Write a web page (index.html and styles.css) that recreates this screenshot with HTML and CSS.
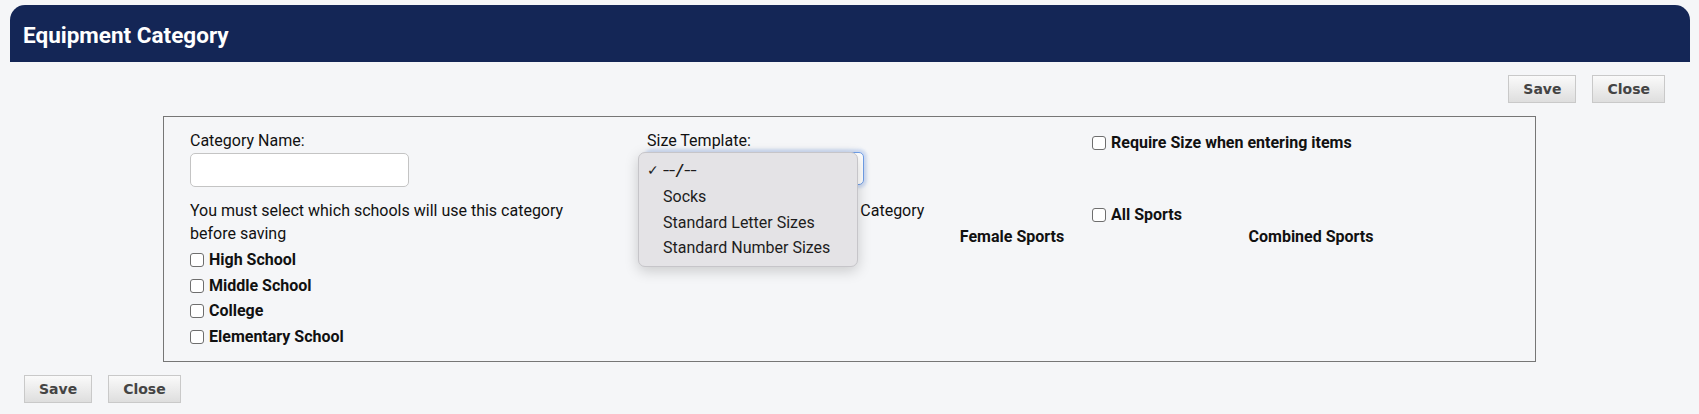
FILE: index.html
```html
<!DOCTYPE html>
<html lang="en">
<head>
<meta charset="utf-8">
<title>Equipment Category</title>
<link rel="stylesheet" href="styles.css">
</head>
<body>
<div class="page">
  <header class="titlebar"><h1 class="title">Equipment Category</h1></header>

  <div class="actions actions-top">
    <button class="btn" type="button">Save</button>
    <button class="btn" type="button">Close</button>
  </div>

  <div class="formbox">
    <div class="col-school">
      <label class="field-label">Category Name:</label>
      <input class="text-input" type="text">
      <p class="note">You must select which schools will use this category<br>before saving</p>
      <ul class="checklist">
        <li><label class="check"><input class="box" type="checkbox"><span>High School</span></label></li>
        <li><label class="check"><input class="box" type="checkbox"><span>Middle School</span></label></li>
        <li><label class="check"><input class="box" type="checkbox"><span>College</span></label></li>
        <li><label class="check"><input class="box" type="checkbox"><span>Elementary School</span></label></li>
      </ul>
    </div>

    <div class="col-right">
      <div class="right-top">
        <div class="size-field">
          <label class="field-label">Size Template:</label>
          <div class="select-wrap">
            <div class="select"><span class="chev">&#8964;</span></div>
            <div class="menu">
              <div class="menu-item"><span class="tick">&#10003;</span><span class="dashes">--/--</span></div>
              <div class="menu-item">Socks</div>
              <div class="menu-item">Standard Letter Sizes</div>
              <div class="menu-item">Standard Number Sizes</div>
            </div>
          </div>
        </div>
        <label class="check check-top"><input class="box" type="checkbox"><span>Require Size when entering items</span></label>
      </div>

      <div class="right-mid">
        <div class="sports-note">Select sports that will use this Category</div>
        <label class="check check-all"><input class="box" type="checkbox"><span>All Sports</span></label>
      </div>

      <div class="sport-heads">
        <div class="sport-head">Male Sports</div>
        <div class="sport-head">Female Sports</div>
        <div class="sport-head">Combined Sports</div>
      </div>
    </div>
  </div>

  <div class="actions actions-bottom">
    <button class="btn" type="button">Save</button>
    <button class="btn" type="button">Close</button>
  </div>
</div>
</body>
</html>
```

FILE: styles.css
```css
* { box-sizing: border-box; }

html, body {
  margin: 0;
  padding: 0;
  background: #f5f6f8;
}

body {
  font-family: Roboto, "Liberation Sans", Arial, sans-serif;
  font-size: 16px;
  color: #111;
}

.page {
  padding-top: 5px;
}

.titlebar {
  margin: 0 9px 0 10px;
  height: 57px;
  background: #142656;
  border-radius: 15px 15px 0 0;
  display: flex;
  align-items: center;
  padding: 2px 13px 0;
}

.title {
  margin: 0;
  font-family: Roboto, "Liberation Sans", Arial, sans-serif;
  font-weight: 700;
  font-size: 22.5px;
  color: #fff;
}

.actions {
  display: flex;
  gap: 16px;
}

.actions-top {
  justify-content: flex-end;
  margin: 13px 34px 13px 0;
}

.actions-bottom {
  margin: 13px 0 0 24px;
}

.btn {
  height: 28px;
  padding: 0 14px;
  border: 1px solid #c9c9c9;
  border-radius: 0;
  background: linear-gradient(#fafafa, #dedede);
  font-family: "DejaVu Sans", Verdana, sans-serif;
  font-weight: 700;
  font-size: 14px;
  color: #444;
}

.formbox {
  width: 1373px;
  margin: 0 auto;
  border: 1px solid #767676;
  padding: 15px 0 11px 26px;
  display: flex;
}

.col-school {
  width: 457px;
  display: flex;
  flex-direction: column;
  align-items: flex-start;
}

.field-label {
  display: block;
  line-height: 18px;
}

.text-input {
  margin-top: 3px;
  width: 219px;
  height: 34px;
  border: 1px solid #c4c4c4;
  border-radius: 5px;
  background: #fff;
}

.note {
  margin: 12px 0 0;
  line-height: 23px;
}

.checklist {
  list-style: none;
  margin: 2px 0 0;
  padding: 0;
}

.checklist li {
  height: 25.75px;
  display: flex;
  align-items: center;
}

.check {
  display: flex;
  align-items: center;
  gap: 5px;
  font-weight: 700;
  line-height: 18px;
}

.box {
  appearance: none;
  -webkit-appearance: none;
  margin: 0;
  width: 14px;
  height: 14px;
  border: 1px solid #6e6e6e;
  border-radius: 3px;
  background: #fff;
}

.col-right {
  flex: 1;
}

.right-top {
  display: flex;
  align-items: flex-start;
}

.size-field {
  width: 445px;
}

.check-top {
  margin-top: 2px;
}

.select-wrap {
  position: relative;
  margin-top: 2px;
  width: 217px;
  height: 33px;
}

.select {
  width: 217px;
  height: 33px;
  border: 1px solid #6f9ee8;
  border-radius: 5px;
  background: #fff;
  box-shadow: 0 0 3px 3px rgba(120, 160, 230, 0.3);
  position: relative;
}

.chev {
  position: absolute;
  right: 3px;
  top: 3px;
  font-size: 12px;
  color: #333;
}

.menu {
  position: absolute;
  left: -9px;
  top: 0;
  width: 220px;
  padding: 5px 0;
  background: #e4e3e6;
  border: 1px solid #c6c5c9;
  border-radius: 7px;
  box-shadow: 0 4px 14px rgba(0, 0, 0, 0.18);
  z-index: 5;
}

.menu-item {
  position: relative;
  height: 25.75px;
  line-height: 25.75px;
  padding-left: 24px;
  font-size: 16px;
  color: #1d1d1d;
}

.dashes {
  display: inline-block;
  transform: scaleX(1.38);
  transform-origin: left center;
}

.tick {
  position: absolute;
  left: 8px;
  top: 0;
  font-size: 14px;
  font-weight: 400;
}

.right-mid {
  display: flex;
  align-items: flex-start;
  margin-top: 17px;
  height: 22px;
}

.sports-note {
  width: 445px;
  line-height: 18px;
  word-spacing: -0.6px;
}

.check-all {
  margin-top: 4px;
}

.sport-heads {
  display: grid;
  grid-template-columns: 132px 466px 132px;
  margin-top: 4px;
  font-weight: 700;
  line-height: 18px;
  text-align: center;
}

.sport-head {
  white-space: nowrap;
}
```
